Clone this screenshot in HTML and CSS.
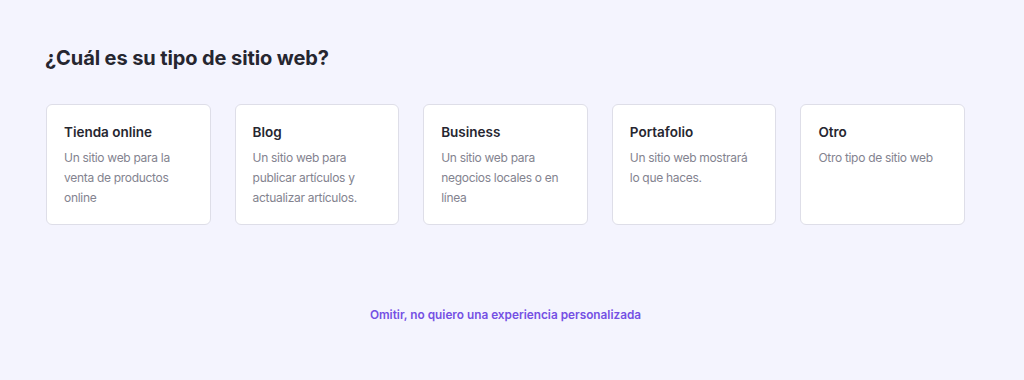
FILE: index.html
```html
<!DOCTYPE html>
<html lang="es">
<head>
<meta charset="utf-8">
<title>Tipo de sitio web</title>
<link rel="stylesheet" href="styles.css">
</head>
<body>
<main class="page">
  <h1 class="title">¿Cuál es su tipo de sitio web?</h1>
  <div class="cards">
    <div class="card">
      <h2 class="card-title">Tienda online</h2>
      <p class="card-text">Un sitio web para la venta de productos online</p>
    </div>
    <div class="card">
      <h2 class="card-title">Blog</h2>
      <p class="card-text">Un sitio web para publicar artículos y actualizar artículos.</p>
    </div>
    <div class="card">
      <h2 class="card-title">Business</h2>
      <p class="card-text">Un sitio web para negocios locales o en línea</p>
    </div>
    <div class="card">
      <h2 class="card-title">Portafolio</h2>
      <p class="card-text">Un sitio web mostrará lo que haces.</p>
    </div>
    <div class="card">
      <h2 class="card-title">Otro</h2>
      <p class="card-text">Otro tipo de sitio web</p>
    </div>
  </div>
  <div class="skip-row">
    <a class="skip" href="#">Omitir, no quiero una experiencia personalizada</a>
  </div>
</main>
</body>
</html>
```

FILE: styles.css
```css
* { box-sizing: border-box; }
html, body {
  margin: 0;
  background: #f4f4fe;
  font-family: Inter, "Noto Sans", sans-serif;
}
.page {
  width: 919px;
  margin-left: 46px;
  padding-top: 44px;
}
.title {
  margin: 0 0 0 -1px;
  font-size: 20px;
  line-height: 28px;
  letter-spacing: -0.1px;
  font-weight: 700;
  color: #262630;
}
.cards {
  margin-top: 32px;
  display: grid;
  grid-template-columns: repeat(5, 1fr);
  gap: 24px;
}
.card {
  height: 121px;
  background: #fff;
  border: 1px solid #dedee8;
  border-radius: 6px;
  padding: 17px 17px 0;
}
.card-title {
  margin: 0;
  font-size: 13.5px;
  line-height: 20px;
  font-weight: 600;
  color: #262630;
}
.card-text {
  margin: 6px 0 0;
  font-size: 12px;
  letter-spacing: -0.3px;
  line-height: 20px;
  color: #83838f;
}
.skip-row {
  margin-top: 78px;
  text-align: center;
}
.skip {
  font-size: 11.8px;
  font-weight: 600;
  color: #7450e4;
  text-decoration: none;
}
```
